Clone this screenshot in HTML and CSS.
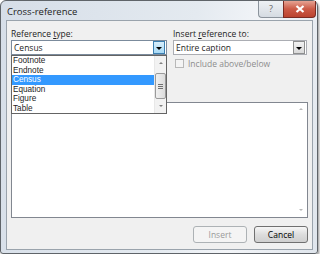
FILE: index.html
```html
<!DOCTYPE html>
<html lang="en">
<head>
  <meta charset="UTF-8" />
  <meta name="viewport" content="width=device-width, initial-scale=1.0"/>
  <title>Cross-reference</title>
  <link rel="stylesheet" href="styles.css">
</head>
<body>
  <div class="window">
    <div class="titlebar">
      <span class="title">Cross-reference</span>
      <div class="controls">
        <span class="btn-help">?</span>
        <span class="btn-close">
          <svg width="10" height="8" viewBox="0 0 10 8"><path d="M1.5 1 L8.5 7 M8.5 1 L1.5 7" stroke="#fff" stroke-width="2.2"/></svg>
        </span>
      </div>
    </div>

    <div class="client">
      <div class="fields">
        <div class="field">
          <label>Reference <u>t</u>ype:</label>
          <div class="combo focus">
            <span class="value">Census</span>
            <span class="arrow hot"><i></i></span>
          </div>

          <!-- open dropdown -->
          <div class="dropdown">
            <ul>
              <li>Footnote</li>
              <li>Endnote</li>
              <li class="selected">Census</li>
              <li>Equation</li>
              <li>Figure</li>
              <li>Table</li>
            </ul>
            <div class="vscroll">
              <span class="up"></span>
              <span class="thumb"><b></b><b></b><b></b></span>
              <span class="down"></span>
            </div>
          </div>
        </div>

        <div class="field">
          <label>Insert <u>r</u>eference to:</label>
          <div class="combo">
            <span class="value">Entire caption</span>
            <span class="arrow"><i></i></span>
          </div>
          <div class="check">
            <span class="box"></span>
            <span>Include above/below</span>
          </div>
        </div>
      </div>

      <div class="listbox">
        <span class="up"></span>
        <span class="down"></span>
      </div>

      <div class="buttons">
        <button disabled>Insert</button>
        <button>Cancel</button>
      </div>
    </div>
  </div>
</body>
</html>
```

FILE: styles.css
```css
body { margin: 0; background: #fff; font-family: "Open Sans", "Noto Sans", sans-serif; font-size: 8.5px; color: #1e1e1e; }

.window {
  width: 316px;
  height: 252px;
  border: 1px solid #5f6469;
  border-radius: 6px 6px 3px 3px;
  background: linear-gradient(100deg, #d6dee8 0%, #e4eaf0 55%, #f3f5f8 75%, #dfe5ec 100%);
  box-shadow: 1px 2px 3px rgba(0, 0, 0, 0.45);
  display: flex;
  flex-direction: column;
}

.titlebar { height: 19px; display: flex; align-items: flex-start; }
.title { padding: 4px 0 0 6px; font-size: 9.5px; color: #222; }
.controls { margin-left: auto; margin-right: 1px; display: flex; }
.btn-help {
  width: 24px; height: 16px;
  border: 1px solid #8b939c; border-top: 0; border-right: 0;
  border-radius: 0 0 0 4px;
  background: linear-gradient(#eef1f4, #d5dbe2);
  color: #666; font-size: 9px; text-align: center; line-height: 16px;
}
.btn-close {
  width: 31px; height: 16px;
  border: 1px solid #7a2b22; border-top: 0;
  border-radius: 0 0 4px 0;
  background: linear-gradient(#e6a393, #cc5a46 50%, #bb432f);
  display: flex; align-items: center; justify-content: center;
}

.client {
  flex: 1;
  margin: 0 4px 3px 5px;
  border: 1px solid #9aa3ac;
  background: #f0f0f0;
  padding: 7px 4px 0;
}

.fields { display: grid; grid-template-columns: 156px 134px; column-gap: 6px; }
.field { position: relative; }
.field label { display: block; height: 12px; line-height: 12px; }
u { text-decoration-thickness: 1px; text-underline-offset: 1px; }

.combo {
  height: 13px;
  border: 1px solid #abadb3;
  background: #fff;
  display: flex; align-items: center;
  padding-left: 2px;
}
.combo.focus { border-color: #7b8b9c; }
.combo .value { flex: 1; }
.arrow {
  width: 10px; height: 11px; margin-right: 1px;
  border: 1px solid #8e8f8f;
  background: linear-gradient(#f2f2f2, #d9d9d9);
  display: flex; align-items: center; justify-content: center;
}
.arrow.hot { border-color: #3c7fb1; background: linear-gradient(#d8eefb, #a7d9f5); }
.arrow i { border: 3px solid transparent; border-top: 3px solid #000; border-bottom: 0; width: 0; height: 0; margin-top: 1px; }

.dropdown {
  position: absolute; left: 0; top: 27px;
  width: 154px; height: 57px;
  border: 1px solid #646464;
  background: #fff;
  display: flex;
  z-index: 2;
}
.dropdown ul { list-style: none; margin: 0; padding: 0; flex: 1; }
.dropdown li {
  height: 9.5px; line-height: 9.5px; padding-left: 1px;
  font-family: "Liberation Sans", Arial, sans-serif; font-size: 8.2px;
}
.dropdown li.selected { background: #3399ff; color: #fff; }

.vscroll {
  width: 11px;
  background: #f2f2f2;
  border-left: 1px solid #e8e8e8;
  display: flex; flex-direction: column; align-items: center;
}
.vscroll .thumb {
  width: 9px; height: 24px; margin-top: 9px;
  border: 1px solid #9a9a9a; border-radius: 2px;
  background: linear-gradient(90deg, #f0f0f0, #dcdcdc);
  display: flex; flex-direction: column; align-items: center; justify-content: center; gap: 1px;
}
.vscroll .thumb b { width: 5px; height: 1px; background: #707070; }
.up, .down { width: 0; height: 0; border: 2.5px solid transparent; }
.up { border-bottom: 2px solid #808080; border-top: 0; }
.down { border-top: 2px solid #808080; border-bottom: 0; }
.vscroll .up { margin-top: 6px; }
.vscroll .down { margin-top: 6px; }

.check { display: flex; align-items: center; gap: 4px; margin: 3px 0 0 2px; color: #8d8d8d; }
.check .box { width: 7px; height: 7px; border: 1px solid #b8b8b8; background: #f4f4f4; }

.listbox {
  margin-top: 33px;
  height: 116px;
  border: 1px solid #828790;
  background: #fff;
  display: flex; flex-direction: column; align-items: flex-end; justify-content: space-between;
  padding: 5px 4px 6px 0;
  box-sizing: border-box;
}
.listbox .up, .listbox .down { border-width: 2.5px; }
.listbox .up { border-top: 0; border-bottom: 2px solid #b8b8b8; }
.listbox .down { border-bottom: 0; border-top: 2px solid #b8b8b8; }

.buttons { display: flex; justify-content: flex-end; gap: 7px; margin-top: 8px; }
button {
  width: 54px; height: 17px;
  font: inherit; color: #000;
  border: 1px solid #707070; border-radius: 3px;
  background: linear-gradient(#f6f6f6, #dddddd 50%, #cfcfcf);
  padding: 0;
}
button:disabled { color: #9a9a9a; border-color: #adb2b5; background: #f4f4f4; }
```
